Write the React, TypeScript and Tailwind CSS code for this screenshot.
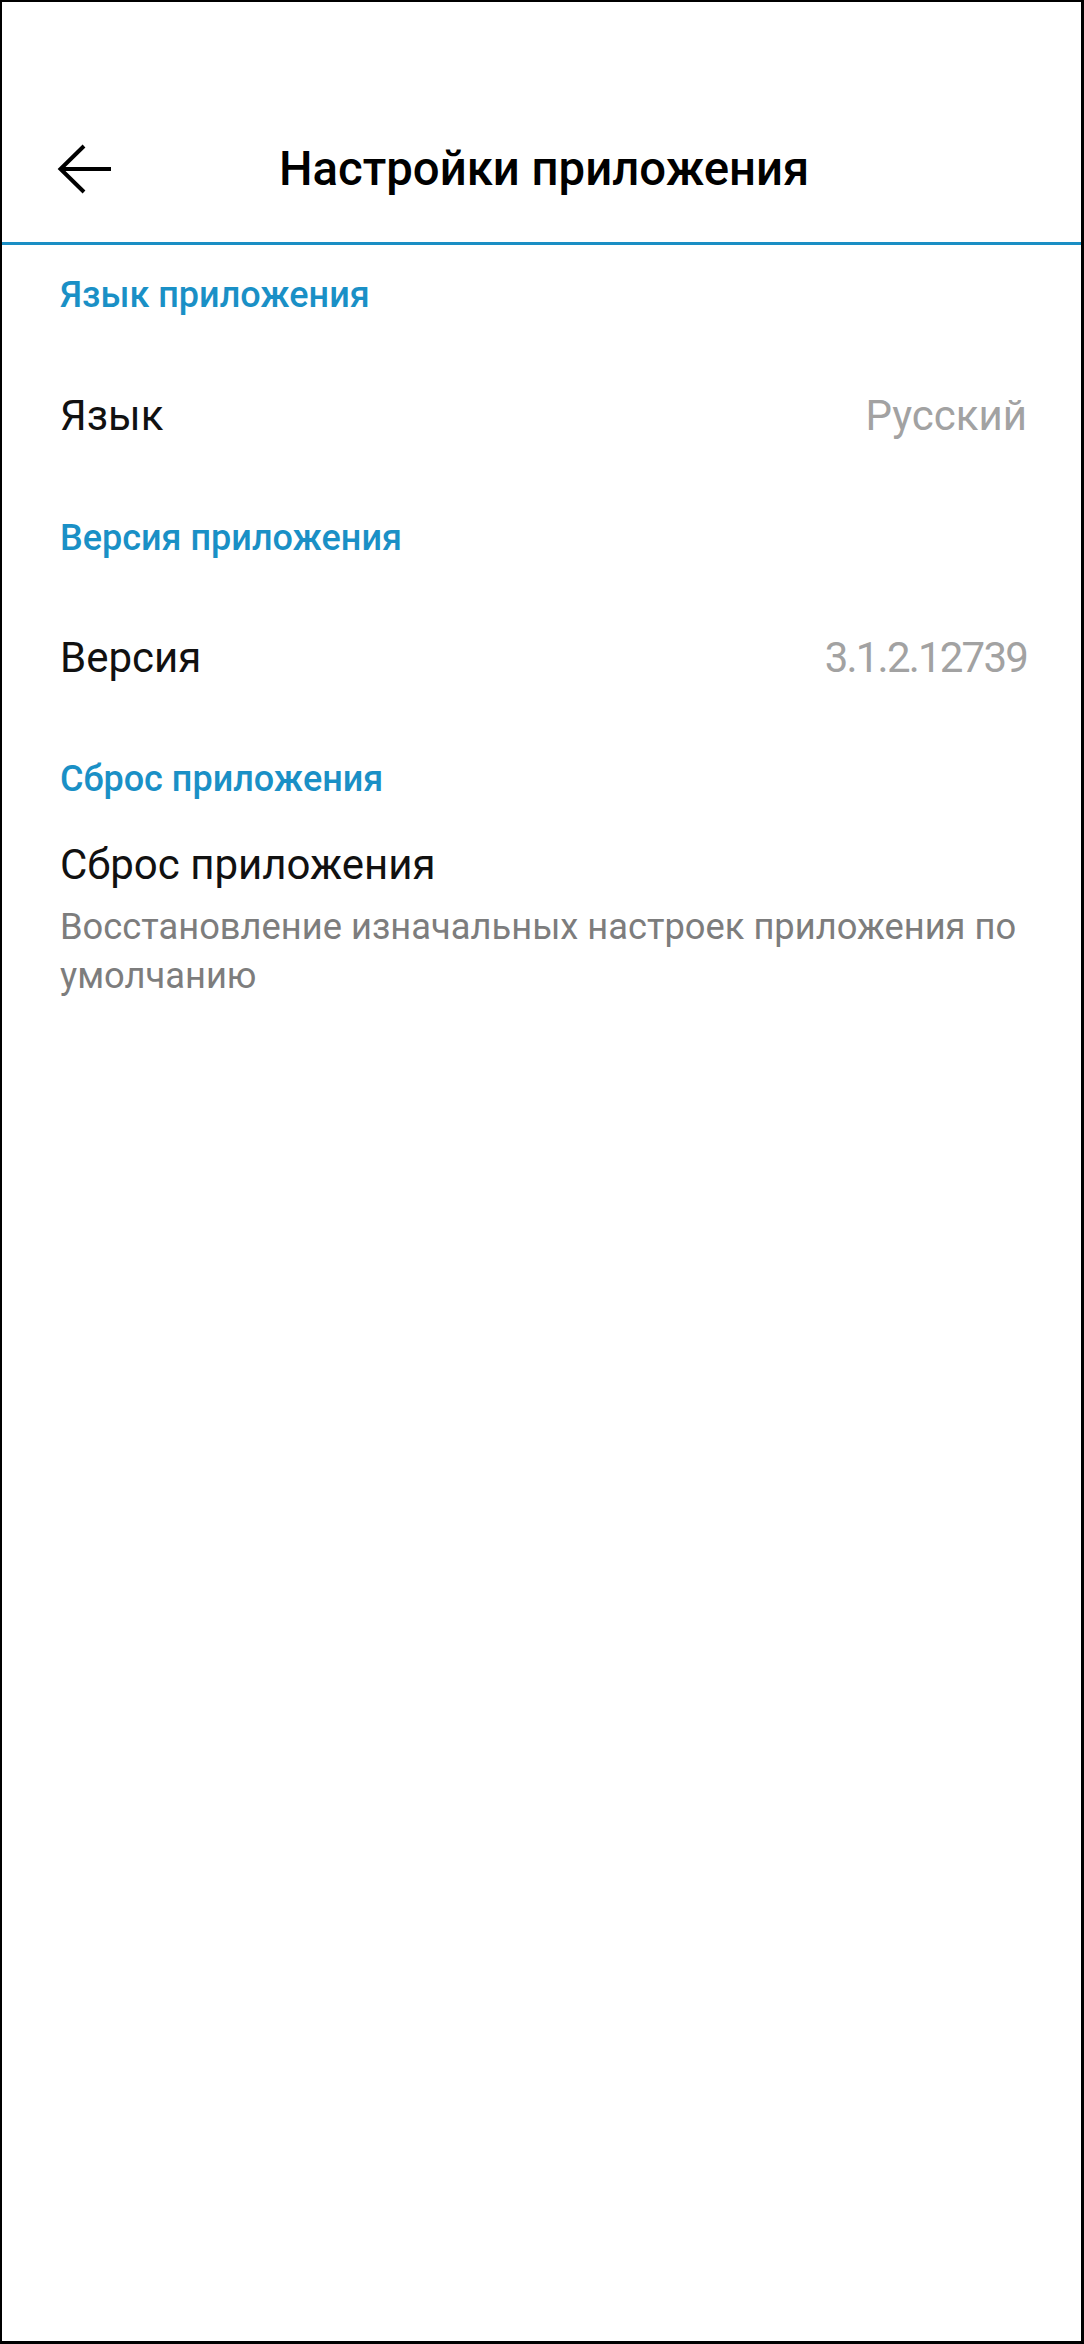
function BackArrow() {
  return (
    <svg
      width="56"
      height="52"
      viewBox="0 0 56 52"
      fill="none"
      stroke="#000000"
      strokeWidth="4"
      className="ml-[55px] shrink-0"
    >
      <path d="M3 26H54" />
      <path d="M27 3L3.5 26L27 49" strokeLinejoin="miter" />
    </svg>
  )
}

function SectionTitle({ label, height }: { label: string; height: string }) {
  return (
    <div className={`flex items-center px-[58px] ${height}`}>
      <p className="text-[36px] font-medium leading-[48px] text-[#1a90c6]">
        {label}
      </p>
    </div>
  )
}

function ValueRow({
  label,
  value,
  height,
  tight = false,
}: {
  label: string
  value: string
  height: string
  tight?: boolean
}) {
  return (
    <div className={`flex items-center justify-between pl-[58px] pr-[54px] ${height}`}>
      <span className="text-[42px] leading-[52px] text-[#111111]">{label}</span>
      <span
        className={`text-[42px] leading-[52px] text-[#a2a2a2] ${
          tight ? 'tracking-[-1.8px]' : ''
        }`}
      >
        {value}
      </span>
    </div>
  )
}

export default function App() {
  return (
    <div
      className="flex h-[2344px] w-[1084px] flex-col border-t-2 border-l-2 border-r-[3px] border-b-[3px] border-black bg-white"
      style={{ fontFamily: 'Roboto, "Noto Sans", sans-serif' }}
    >
      <div className="h-[94px] shrink-0" />

      <header className="flex h-[146px] shrink-0 items-center">
        <BackArrow />
        <h1 className="ml-[166px] text-[47.3px] font-medium leading-[56px] text-black">
          Настройки приложения
        </h1>
      </header>

      <div className="h-[3px] shrink-0 bg-[#1a8ec4]" />

      <SectionTitle label="Язык приложения" height="h-[100px]" />
      <ValueRow label="Язык" value="Русский" height="h-[142px]" />

      <SectionTitle label="Версия приложения" height="h-[102px]" />
      <ValueRow label="Версия" value="3.1.2.12739" height="h-[138px]" tight />

      <SectionTitle label="Сброс приложения" height="h-[104px]" />

      <div className="flex flex-col pl-[58px] pr-[40px] pt-[8px]">
        <p className="text-[42px] leading-[52px] text-[#111111]">
          Сброс приложения
        </p>
        <p className="mt-[11px] text-[36.3px] leading-[49px] text-[#7d7d7d]">
          Восстановление изначальных настроек приложения по умолчанию
        </p>
      </div>
    </div>
  )
}
